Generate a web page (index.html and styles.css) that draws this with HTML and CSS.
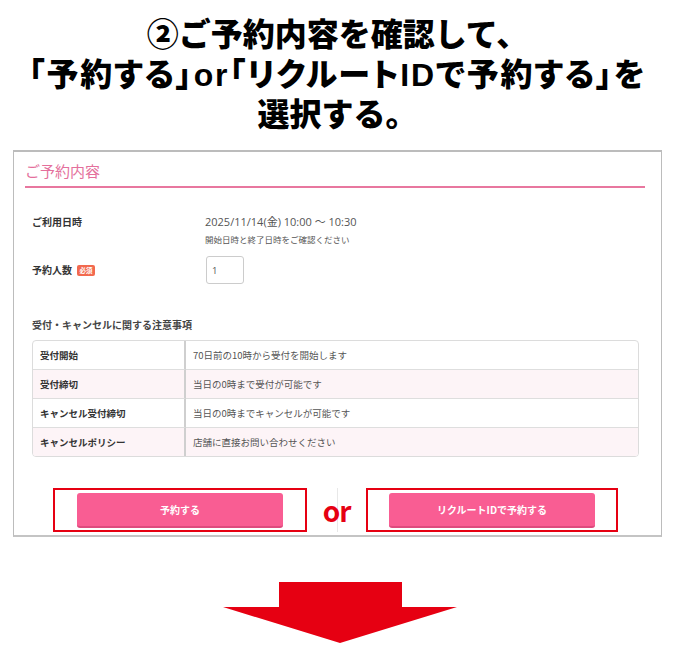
FILE: index.html
```html
<!DOCTYPE html>
<html lang="ja">
<head>
<meta charset="utf-8">
<title>ご予約内容の確認</title>
<link rel="stylesheet" href="styles.css">
</head>
<body>
<header class="title">
  <h1 class="title-text">②ご予約内容を確認して、<br><span class="title-tight">「予約する」or「リクルートIDで予約する」を</span><br>選択する。</h1>
</header>

<section class="panel">
  <h2 class="panel-heading">ご予約内容</h2>
  <div class="form">
    <div class="row row--date">
      <div class="label">ご利用日時</div>
      <div class="value">
        <div class="date">2025/11/14(金) 10:00 ～ 10:30</div>
        <div class="note">開始日時と終了日時をご確認ください</div>
      </div>
    </div>
    <div class="row row--count">
      <div class="label">予約人数<span class="badge">必須</span></div>
      <div class="value"><input class="count" type="text" value="1"></div>
    </div>
    <div class="notice-title">受付・キャンセルに関する注意事項</div>
    <table class="notice">
      <tr><th>受付開始</th><td>70日前の10時から受付を開始します</td></tr>
      <tr class="alt"><th>受付締切</th><td>当日の0時まで受付が可能です</td></tr>
      <tr><th>キャンセル受付締切</th><td>当日の0時までキャンセルが可能です</td></tr>
      <tr class="alt"><th>キャンセルポリシー</th><td>店舗に直接お問い合わせください</td></tr>
    </table>
  </div>
  <div class="actions">
    <div class="frame"><span class="btn">予約する</span></div>
    <div class="or">or</div>
    <div class="frame frame--wide"><span class="btn">リクルートIDで予約する</span></div>
  </div>
</section>

<div class="arrow-wrap">
  <svg class="arrow" width="234" height="61" viewBox="0 0 234 61" aria-hidden="true">
    <polygon points="56,0 179,0 179,25 234,25 117,61 0,25 56,25" fill="#e60012"/>
  </svg>
</div>
</body>
</html>
```

FILE: styles.css
```css
* { box-sizing: border-box; }

html, body {
  margin: 0;
  padding: 0;
  background: #fff;
}

body {
  width: 675px;
  font-family: "Noto Sans CJK JP", "Noto Sans", sans-serif;
  color: #333;
}

/* ---------- title ---------- */
.title {
  height: 150px;
  padding-top: 15px;
  text-align: center;
  color: #000;
}

.title-text {
  margin: 0;
  font-family: "Liberation Sans", "Noto Sans CJK JP", sans-serif;
  font-size: 32px;
  line-height: 40px;
  font-weight: 900;
  white-space: nowrap;
}

.title-tight {
  font-feature-settings: "palt";
  letter-spacing: 1.8px;
}

/* ---------- panel ---------- */
.panel {
  margin: 0 13px;
  height: 387px;
  border: 1px solid #bcbcbc;
  border-top-width: 2px;
  border-bottom: 2px solid #c4c4c4;
  background: #fff;
}

.panel-heading {
  margin: 9px 16px 0 11px;
  padding-bottom: 5px;
  border-bottom: 2px solid #e8779f;
  font-size: 15px;
  line-height: 20px;
  font-weight: 400;
  color: #e46f9c;
}

.form {
  padding: 0 22px 0 18px;
}

.row {
  display: flex;
}

.row--date {
  margin-top: 26px;
  align-items: flex-start;
}

.row--count {
  margin-top: 10px;
  align-items: center;
}

.label {
  width: 173px;
  flex: none;
  display: flex;
  align-items: center;
  font-size: 10px;
  line-height: 16px;
  font-weight: 700;
  color: #333;
}

.badge {
  margin-left: 5px;
  width: 18px;
  height: 11px;
  border-radius: 2px;
  background: #f2694e;
  color: #fff;
  font-size: 6.5px;
  line-height: 11px;
  font-weight: 700;
  text-align: center;
}

.date {
  font-family: "Open Sans", "Noto Sans CJK JP", sans-serif;
  font-size: 11px;
  line-height: 16px;
  color: #555;
}

.note {
  margin-top: 2px;
  font-size: 8.5px;
  line-height: 14px;
  color: #555;
}

.count {
  display: block;
  width: 38px;
  height: 28px;
  margin: 0 0 0 1px;
  padding: 0 5px;
  border: 1px solid #ccc;
  border-radius: 3px;
  font-family: "Open Sans", sans-serif;
  font-size: 9.5px;
  color: #555;
  background: #fff;
  outline: none;
}

.notice-title {
  margin-top: 33px;
  font-size: 10px;
  line-height: 16px;
  font-weight: 700;
  color: #444;
}

.notice {
  margin-top: 7px;
  width: 607px;
  border-collapse: separate;
  border-spacing: 0;
  border: 1px solid #dcdcdc;
  border-radius: 4px;
  overflow: hidden;
  font-size: 9.5px;
}

.notice th,
.notice td {
  height: 29px;
  padding: 0 0 0 7px;
  text-align: left;
  vertical-align: middle;
  border-top: 1px solid #dedede;
}

.notice tr:first-child th,
.notice tr:first-child td {
  border-top: 0;
  height: 28px;
}

.notice th {
  width: 153px;
  font-weight: 700;
  color: #333;
  border-right: 2px solid #cfcfcf;
}

.notice td {
  color: #555;
}

.notice tr.alt th,
.notice tr.alt td {
  background: #fdf4f7;
}

/* ---------- actions ---------- */
.actions {
  margin-top: 31px;
  display: flex;
  justify-content: center;
  padding-right: 4px;
}

.frame {
  width: 254px;
  height: 44px;
  border: 2px solid #e60012;
  display: flex;
  align-items: center;
  justify-content: center;
}

.frame--wide {
  width: 252px;
}

.btn {
  width: 206px;
  height: 35px;
  border-radius: 3px;
  background: #f95d93;
  border-bottom: 2px solid #de4a7e;
  color: #fff;
  font-size: 10px;
  font-weight: 700;
  display: flex;
  align-items: center;
  justify-content: center;
}

.or {
  width: 59px;
  height: 44px;
  display: flex;
  align-items: center;
  justify-content: center;
  font-family: "Noto Sans CJK JP", sans-serif;
  font-size: 28px;
  font-weight: 700;
  letter-spacing: -1px;
  color: #e60012;
  background: linear-gradient(to right, transparent 30px, #e8e8e8 30px, #e8e8e8 31px, transparent 31px);
}

/* ---------- arrow ---------- */
.arrow-wrap {
  padding: 45px 0 0 223px;
}

.arrow {
  display: block;
}
```
